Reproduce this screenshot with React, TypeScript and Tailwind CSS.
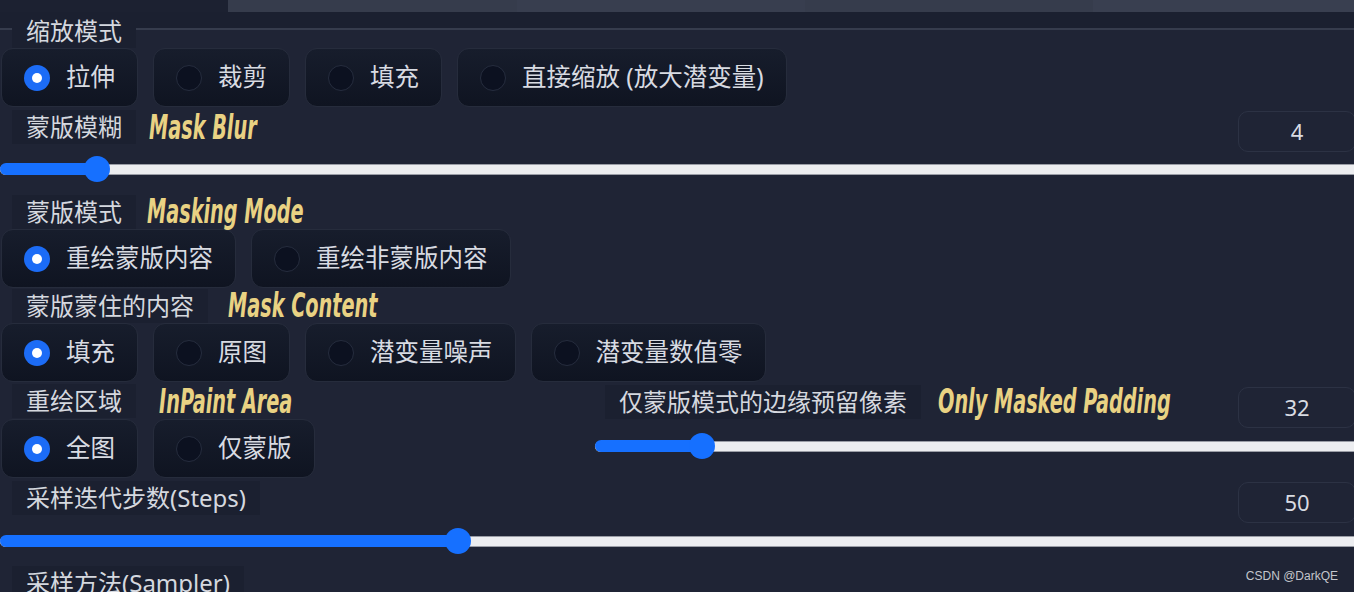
import React from "react";

const cjk = { fontFamily: '"Noto Sans", "Noto Sans CJK SC", sans-serif' };
const hint = {
  fontFamily: '"DejaVu Sans Condensed", "Liberation Sans", sans-serif',
};

function Label({ text, className = "" }: { text: string; className?: string }) {
  return (
    <div
      className={`flex h-[34px] shrink-0 items-center whitespace-nowrap bg-[#1b2030] px-[14px] text-[24px] leading-none text-[#d5d8df] ${className}`}
      style={cjk}
    >
      {text}
    </div>
  );
}

// yellow annotation text, condensed by scaling; wrapper keeps it from pushing the row
function Hint({ text, className = "" }: { text: string; className?: string }) {
  return (
    <div className={`min-w-0 flex-1 ${className}`}>
      <span
        className="inline-block origin-left scale-x-[0.63] whitespace-nowrap text-[34px] font-semibold leading-none italic text-[#e9d283]"
        style={hint}
      >
        {text}
      </span>
    </div>
  );
}

function NumberBox({ value, className = "" }: { value: string; className?: string }) {
  return (
    <div
      className={`-mr-[2px] ml-auto flex h-[41px] w-[118px] shrink-0 items-center justify-center rounded-[10px] border border-[#2c3244] text-[22px] text-[#d8dbe2] ${className}`}
      style={cjk}
    >
      {value}
    </div>
  );
}

function Slider({ pos }: { pos: number }) {
  return (
    <div className="relative flex h-[26px] items-center">
      <div className="h-[11px] w-full rounded-l-full border-y border-[#9a9da6] bg-[#ecedf0]" />
      <div
        className="absolute left-0 top-[7px] h-[12px] rounded-l-full bg-[#1670ff]"
        style={{ width: pos }}
      />
      <div
        className="absolute top-0 h-[26px] w-[26px] rounded-full bg-[#1670ff]"
        style={{ left: pos - 13 }}
      />
    </div>
  );
}

function Radio({ text, checked = false }: { text: string; checked?: boolean }) {
  return (
    <div className="flex h-[59px] items-center rounded-[12px] border border-[#262c3c] bg-gradient-to-b from-[#171d2c] to-[#0f1421] pl-[22px] pr-[22px]">
      {checked ? (
        <div className="flex h-[26px] w-[26px] items-center justify-center rounded-full bg-[#1c6cf6]">
          <div className="h-[10px] w-[10px] rounded-full bg-white" />
        </div>
      ) : (
        <div className="h-[26px] w-[26px] rounded-full border border-[#262d3e] bg-[#0c1120]" />
      )}
      <span className="ml-[16px] whitespace-nowrap text-[24.5px] text-[#d8dbe2]" style={cjk}>
        {text}
      </span>
    </div>
  );
}

function RadioRow({ items, checked }: { items: string[]; checked: number }) {
  return (
    <div className="ml-[1px] flex gap-[15px]">
      {items.map((t, i) => (
        <Radio key={t} text={t} checked={i === checked} />
      ))}
    </div>
  );
}

export default function App() {
  return (
    <div className="relative h-[592px] w-[1354px] overflow-hidden bg-[#1f2435]">
      {/* top tab strip */}
      <div className="flex h-[12px]">
        <div className="w-[228px] bg-[#1c2131]" />
        <div className="w-[289px] bg-[#363c4c]" />
        <div className="w-[288px] bg-[#383e4f]" />
        <div className="w-[288px] bg-[#363c4c]" />
        <div className="flex-1 bg-[#393f50]" />
      </div>
      <div className="h-[16px] bg-[#1b2030]" />
      <div className="h-[2px] bg-[#363c4d]" />

      <Label text="缩放模式" className="relative -mt-[16px] ml-[12px] w-fit" />
      <RadioRow items={["拉伸", "裁剪", "填充", "直接缩放 (放大潜变量)"]} checked={0} />

      <div className="flex h-[49px] items-start">
        <Label text="蒙版模糊" className="ml-[12px] mt-[3px]" />
        <Hint text="Mask Blur" className="ml-[13px] mt-[3px]" />
        <NumberBox value="4" className="mt-[4px]" />
      </div>
      <Slider pos={97} />

      <div className="flex h-[47px] items-start">
        <Label text="蒙版模式" className="ml-[12px] mt-[13px]" />
        <Hint text="Masking Mode" className="ml-[11px] mt-[12px]" />
      </div>
      <RadioRow items={["重绘蒙版内容", "重绘非蒙版内容"]} checked={0} />

      <div className="flex h-[35px] items-start">
        <Label text="蒙版蒙住的内容" className="ml-[12px] mt-[1px]" />
        <Hint text="Mask Content" className="ml-[20px]" />
      </div>
      <RadioRow items={["填充", "原图", "潜变量噪声", "潜变量数值零"]} checked={0} />

      <div className="flex">
        <div className="w-[595px] shrink-0">
          <div className="flex h-[37px] items-start">
            <Label text="重绘区域" className="ml-[12px] mt-[2px]" />
            <Hint text="InPaint Area" className="ml-[23px] mt-[2px]" />
          </div>
          <RadioRow items={["全图", "仅蒙版"]} checked={0} />
        </div>
        <div className="min-w-0 flex-1">
          <div className="flex h-[51px] items-start">
            <Label text="仅蒙版模式的边缘预留像素" className="ml-[10px] mt-[3px]" />
            <Hint text="Only Masked Padding" className="ml-[17px] mt-[2px]" />
            <NumberBox value="32" className="mt-[5px]" />
          </div>
          <Slider pos={107} />
        </div>
      </div>

      <div className="flex h-[50px] items-start">
        <Label text="采样迭代步数(Steps)" className="ml-[12px] mt-[3px]" />
        <NumberBox value="50" className="mt-[4px]" />
      </div>
      <Slider pos={458} />

      <Label text="采样方法(Sampler)" className="ml-[12px] mt-[12px] w-fit" />

      <div
        className="absolute bottom-[7px] right-[16px] text-[12px] text-[#c4c6cc]"
        style={{ fontFamily: '"Liberation Sans", Arial, sans-serif' }}
      >
        CSDN @DarkQE
      </div>
    </div>
  );
}
